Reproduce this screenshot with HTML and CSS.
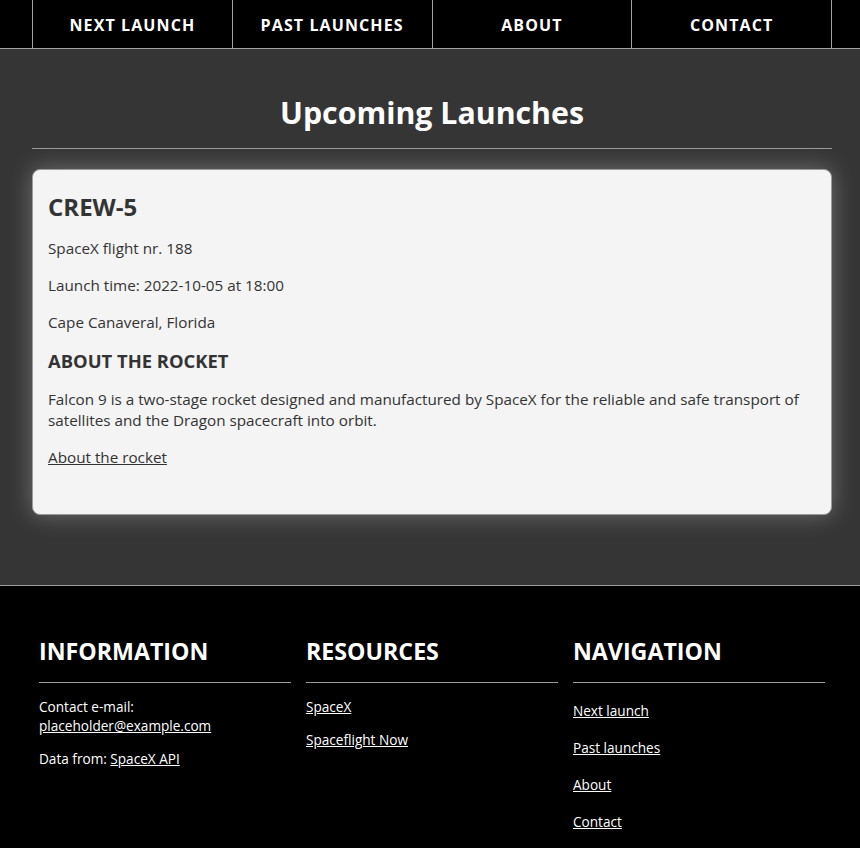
FILE: index.html
```html
<!DOCTYPE html>
<html lang="en">
<head>
<meta charset="utf-8">
<title>Upcoming Launches</title>
<link rel="stylesheet" href="styles.css">
</head>
<body>
<nav class="topnav">
  <ul class="wrap nav-list">
    <li class="nav-item"><a href="#" class="nav-link">NEXT LAUNCH</a></li>
    <li class="nav-item"><a href="#" class="nav-link">PAST LAUNCHES</a></li>
    <li class="nav-item"><a href="#" class="nav-link">ABOUT</a></li>
    <li class="nav-item"><a href="#" class="nav-link">CONTACT</a></li>
  </ul>
</nav>
<main class="main">
  <div class="wrap">
    <h1 class="page-title">Upcoming Launches</h1>
    <hr class="rule">
    <article class="card">
      <h2 class="card-title">CREW-5</h2>
      <p class="card-text">SpaceX flight nr. 188</p>
      <p class="card-text">Launch time: 2022-10-05 at 18:00</p>
      <p class="card-text">Cape Canaveral, Florida</p>
      <h3 class="card-sub">ABOUT THE ROCKET</h3>
      <p class="card-text">Falcon 9 is a two-stage rocket designed and manufactured by SpaceX for the reliable and safe transport of satellites and the Dragon spacecraft into orbit.</p>
      <p class="card-text"><a href="#" class="card-link">About the rocket</a></p>
    </article>
  </div>
</main>
<footer class="footer">
  <div class="wrap footer-grid">
    <section class="fcol">
      <h2 class="fcol-title">INFORMATION</h2>
      <hr class="frule">
      <p class="ftext">Contact e-mail:<br><a href="#" class="flink">placeholder@example.com</a></p>
      <p class="ftext">Data from: <a href="#" class="flink">SpaceX API</a></p>
    </section>
    <section class="fcol">
      <h2 class="fcol-title">RESOURCES</h2>
      <hr class="frule">
      <p class="ftext"><a href="#" class="flink">SpaceX</a></p>
      <p class="ftext"><a href="#" class="flink">Spaceflight Now</a></p>
    </section>
    <section class="fcol">
      <h2 class="fcol-title">NAVIGATION</h2>
      <hr class="frule">
      <ul class="fnav">
        <li><a href="#" class="flink">Next launch</a></li>
        <li><a href="#" class="flink">Past launches</a></li>
        <li><a href="#" class="flink">About</a></li>
        <li><a href="#" class="flink">Contact</a></li>
      </ul>
    </section>
  </div>
</footer>
</body>
</html>
```

FILE: styles.css
```css
* { box-sizing: border-box; }
html, body {
  margin: 0;
  padding: 0;
  background: #000;
  font-family: "Open Sans", "Noto Sans", sans-serif;
}
.wrap {
  width: 800px;
  margin-left: 32px;
}
.topnav {
  background: #000;
  height: 49px;
  border-bottom: 1px solid #a0a0a0;
}
.nav-list {
  list-style: none;
  padding: 0;
  margin-top: 0;
  margin-bottom: 0;
  display: flex;
  height: 48px;
}
.nav-item {
  flex: 1;
  border-right: 1px solid #a0a0a0;
  display: flex;
  align-items: center;
  justify-content: center;
  padding-top: 1px;
}
.nav-item:first-child { border-left: 1px solid #a0a0a0; }
.nav-link {
  color: #fff;
  text-decoration: none;
  font-weight: 700;
  font-size: 16px;
  letter-spacing: 1.1px;
}
.main {
  background: #353535;
  padding: 44px 0 70px;
}
.page-title {
  margin: 0;
  text-align: center;
  color: #fff;
  font-size: 30.3px;
  line-height: 40px;
  font-weight: 700;
}
.rule {
  border: 0;
  border-top: 1px solid #9a9a9a;
  margin: 15px 0 20px;
}
.card {
  background: #f4f4f4;
  border: 1px solid #9a9a9a;
  border-radius: 8px;
  padding: 22px 15px 30px;
  box-shadow: 0 0 24px rgba(255, 255, 255, 0.3);
  color: #333;
}
.card-title {
  margin: 0;
  font-size: 24px;
  line-height: 30px;
  font-weight: 700;
}
.card-text {
  margin: 16px 0;
  font-size: 15.25px;
  line-height: 21px;
}
.card-sub {
  margin: 16px 0;
  font-size: 18.4px;
  line-height: 24px;
  font-weight: 700;
}
.card-link { color: #333; }
.footer {
  background: #000;
  border-top: 1px solid #a0a0a0;
  padding: 48px 0 40px;
  color: #fff;
}
.footer-grid {
  display: grid;
  grid-template-columns: 1fr 1fr 1fr;
  column-gap: 15px;
  padding: 0 7px;
}
.fcol-title {
  margin: 0;
  font-size: 23.2px;
  line-height: 34px;
  font-weight: 700;
}
.frule {
  border: 0;
  border-top: 1px solid #9a9a9a;
  margin: 14px 0 14px;
}
.ftext {
  margin: 0 0 14px;
  font-size: 13.6px;
  line-height: 19px;
}
.flink { color: #fff; }
.fnav {
  list-style: none;
  margin: 0;
  padding: 4px 0 0;
  display: flex;
  flex-direction: column;
  gap: 18px;
  font-size: 13.6px;
  line-height: 19px;
}
```
